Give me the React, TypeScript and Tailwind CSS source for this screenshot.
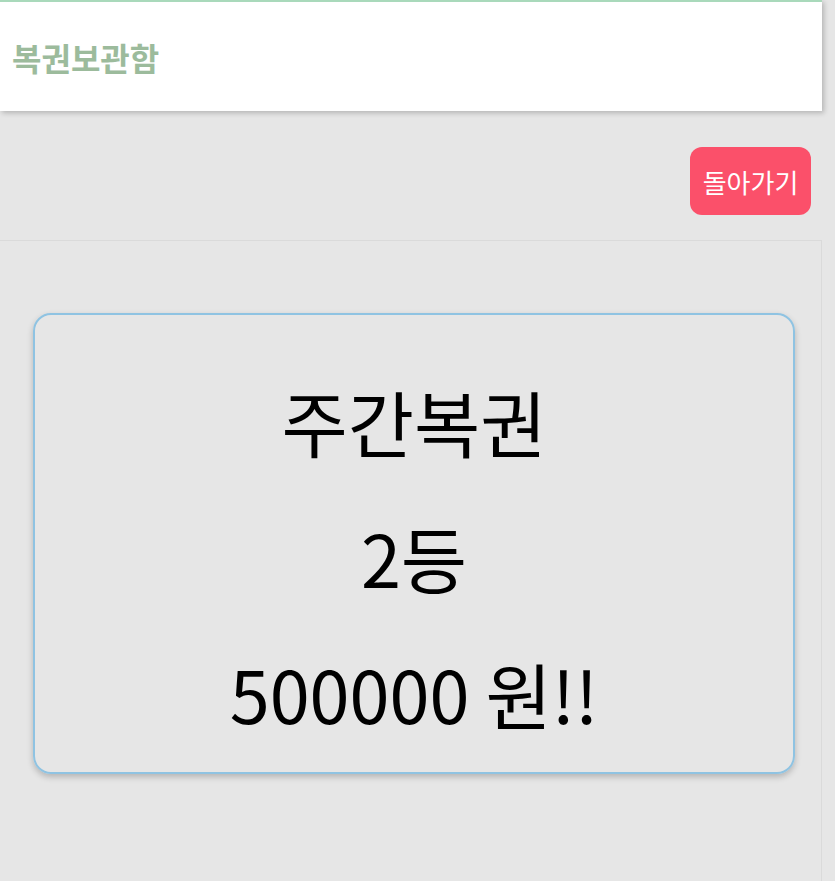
const PRIZE = {
  title: '주간복권',
  rank: '2등',
  amount: '500000 원!!',
}

export default function App() {
  return (
    <div className="min-h-[881px] bg-[#e6e6e6] font-['Noto_Sans_CJK_KR','Noto_Sans',sans-serif]">
      <div className="w-[822px]">
        {/* Header */}
        <header className="h-[111px] bg-white border-t-2 border-[#a9d9bb] shadow-[2px_2px_5px_rgba(0,0,0,0.22)] flex items-center px-3">
          <h1 className="text-[32px] font-bold text-[#9cbb9c]">복권보관함</h1>
        </header>

        {/* Back button */}
        <div className="flex justify-end pt-9 pr-[11px]">
          <button className="w-[121px] h-[68px] rounded-xl bg-[#fb506a] text-white text-[26px]">
            돌아가기
          </button>
        </div>

        {/* Ticket panel */}
        <section className="mt-[25px] h-[641px] border-t border-r border-[#dadada] pt-[72px] pl-[33px] pr-[26px]">
          <div className="h-[461px] rounded-[18px] border-2 border-[#8fc3e2] shadow-[0_3px_6px_rgba(0,0,0,0.22)] flex flex-col items-center pt-[66px] gap-[56px] text-black text-[72px]">
            <p className="leading-[80px]">{PRIZE.title}</p>
            <p className="leading-[80px]">{PRIZE.rank}</p>
            <p className="leading-[80px]">{PRIZE.amount}</p>
          </div>
        </section>
      </div>
    </div>
  )
}
